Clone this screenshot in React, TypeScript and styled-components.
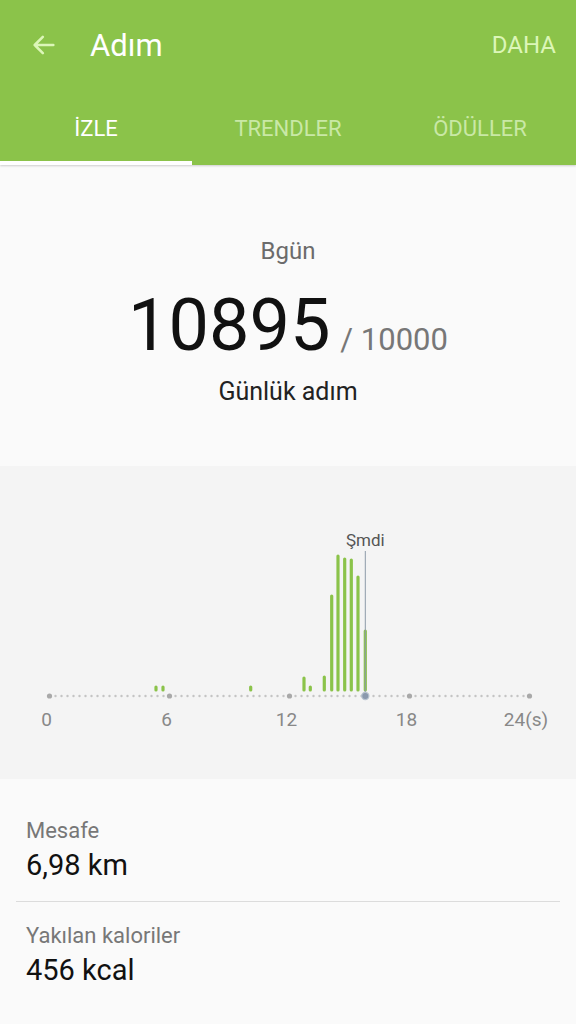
import styled, { createGlobalStyle } from 'styled-components'

const GlobalStyle = createGlobalStyle`
  html, body {
    margin: 0;
    padding: 0;
    background: #fafafa;
    font-family: Roboto, 'Noto Sans', sans-serif;
  }
`

const green = '#8bc34a'

const Page = styled.div`
  width: 576px;
  min-height: 1024px;
  background: #fafafa;
`

const Header = styled.header`
  background: ${green};
  box-shadow: 0 1px 2px rgba(0, 0, 0, 0.18);
`

const TopBar = styled.div`
  height: 90px;
  display: flex;
  align-items: center;
  padding: 0 20px 0 30px;
`

const BackButton = styled.div`
  width: 30px;
  height: 30px;
  display: flex;
  align-items: center;
`

const Title = styled.h1`
  margin: 0 0 0 30px;
  flex: 1;
  font-size: 31px;
  font-weight: 400;
  color: #fff;
`

const Action = styled.span`
  font-size: 24px;
  color: #dcf6b8;
`

const Tabs = styled.nav`
  display: grid;
  grid-template-columns: repeat(3, 1fr);
  height: 75px;
`

const Tab = styled.div<{ $active?: boolean }>`
  display: flex;
  align-items: center;
  justify-content: center;
  padding-top: 6px;
  font-size: 22px;
  color: ${(p) => (p.$active ? '#fff' : '#c9e8a6')};
  border-bottom: 4px solid ${(p) => (p.$active ? '#fff' : 'transparent')};
`

const Summary = styled.section`
  height: 301px;
  display: flex;
  flex-direction: column;
  align-items: center;
  padding-top: 72px;
  box-sizing: border-box;
`

const Day = styled.div`
  font-size: 24px;
  color: #6b6b6b;
`

const CountRow = styled.div`
  display: flex;
  align-items: baseline;
  margin-top: 25px;
`

const Count = styled.span`
  font-size: 72px;
  color: #111;
  line-height: 1;
`

const Goal = styled.span`
  font-size: 31px;
  color: #777;
  margin-left: 10px;
`

const Caption = styled.div`
  margin-top: 15px;
  font-size: 25px;
  color: #222;
`

const ChartArea = styled.section`
  height: 313px;
  background: #f4f4f4;
`

const Stats = styled.section`
  padding: 38px 16px 0;
`

const Stat = styled.div<{ $divider?: boolean }>`
  padding: 0 10px 18px;
  border-bottom: ${(p) => (p.$divider ? '1px solid #dcdcdc' : 'none')};
  & + & {
    padding-top: 20px;
  }
`

const StatLabel = styled.div`
  font-size: 22px;
  color: #777;
  line-height: 28px;
`

const StatValue = styled.div`
  font-size: 29px;
  color: #111;
  line-height: 36px;
  margin-top: 2px;
`

const X0 = 49.5
const PX_HOUR = 20
const AXIS_Y = 230
const BASE_Y = 224

const bars: { x: number; top: number }[] = [
  { x: 156, top: 221 },
  { x: 163, top: 221 },
  { x: 250.7, top: 221 },
  { x: 304, top: 212 },
  { x: 310.3, top: 221 },
  { x: 324.3, top: 211 },
  { x: 331.7, top: 130 },
  { x: 338, top: 90 },
  { x: 344.7, top: 93 },
  { x: 351.3, top: 94 },
  { x: 358, top: 111 },
  { x: 365.3, top: 165 },
]

const NOW_X = 365.3

const ActivityChart = () => {
  const minor: number[] = []
  for (let i = 0; i <= 80; i++) minor.push(X0 + (i * 24 * PX_HOUR) / 80)
  const majors = [0, 6, 12, 18, 24]
  return (
    <svg width="576" height="313" viewBox="0 0 576 313">
      {minor.map((x, i) => (
        <circle key={i} cx={x} cy={AXIS_Y} r={1.2} fill="#c4c4c4" />
      ))}
      {majors.map((h) => (
        <circle key={h} cx={X0 + h * PX_HOUR} cy={AXIS_Y} r={2.6} fill="#a9a9a9" />
      ))}
      {bars.map((b, i) => (
        <line
          key={i}
          x1={b.x}
          x2={b.x}
          y1={b.top}
          y2={BASE_Y}
          stroke={green}
          strokeWidth={3.2}
          strokeLinecap="round"
        />
      ))}
      <line x1={NOW_X} x2={NOW_X} y1={85} y2={AXIS_Y} stroke="#8d9aa8" strokeWidth={1} />
      <circle cx={NOW_X} cy={AXIS_Y} r={3.6} fill="#8a99ad" stroke="#b8c3d0" strokeWidth={1.2} />
      <text x={NOW_X} y={80} textAnchor="middle" fontSize="17" fill="#555" fontFamily="Roboto, sans-serif">
        Şmdi
      </text>
      {majors.map((h) => (
        <text
          key={h}
          x={h === 24 ? 526 : X0 + h * PX_HOUR - 3}
          y={260}
          textAnchor="middle"
          fontSize="19"
          fill="#888"
          fontFamily="Roboto, sans-serif"
        >
          {h === 24 ? '24(s)' : h}
        </text>
      ))}
    </svg>
  )
}

const App = () => {
  return (
    <Page>
      <GlobalStyle />
      <Header>
        <TopBar>
          <BackButton>
            <svg width="28" height="28" viewBox="0 0 24 24" fill="none" stroke="#dcf6b8" strokeWidth="2.2" strokeLinecap="round" strokeLinejoin="round">
              <path d="M20 12H4M11 5l-7 7 7 7" />
            </svg>
          </BackButton>
          <Title>Adım</Title>
          <Action>DAHA</Action>
        </TopBar>
        <Tabs>
          <Tab $active>İZLE</Tab>
          <Tab>TRENDLER</Tab>
          <Tab>ÖDÜLLER</Tab>
        </Tabs>
      </Header>
      <Summary>
        <Day>Bgün</Day>
        <CountRow>
          <Count>10895</Count>
          <Goal>/ 10000</Goal>
        </CountRow>
        <Caption>Günlük adım</Caption>
      </Summary>
      <ChartArea>
        <ActivityChart />
      </ChartArea>
      <Stats>
        <Stat $divider>
          <StatLabel>Mesafe</StatLabel>
          <StatValue>6,98 km</StatValue>
        </Stat>
        <Stat>
          <StatLabel>Yakılan kaloriler</StatLabel>
          <StatValue>456 kcal</StatValue>
        </Stat>
      </Stats>
    </Page>
  )
}

export default App
